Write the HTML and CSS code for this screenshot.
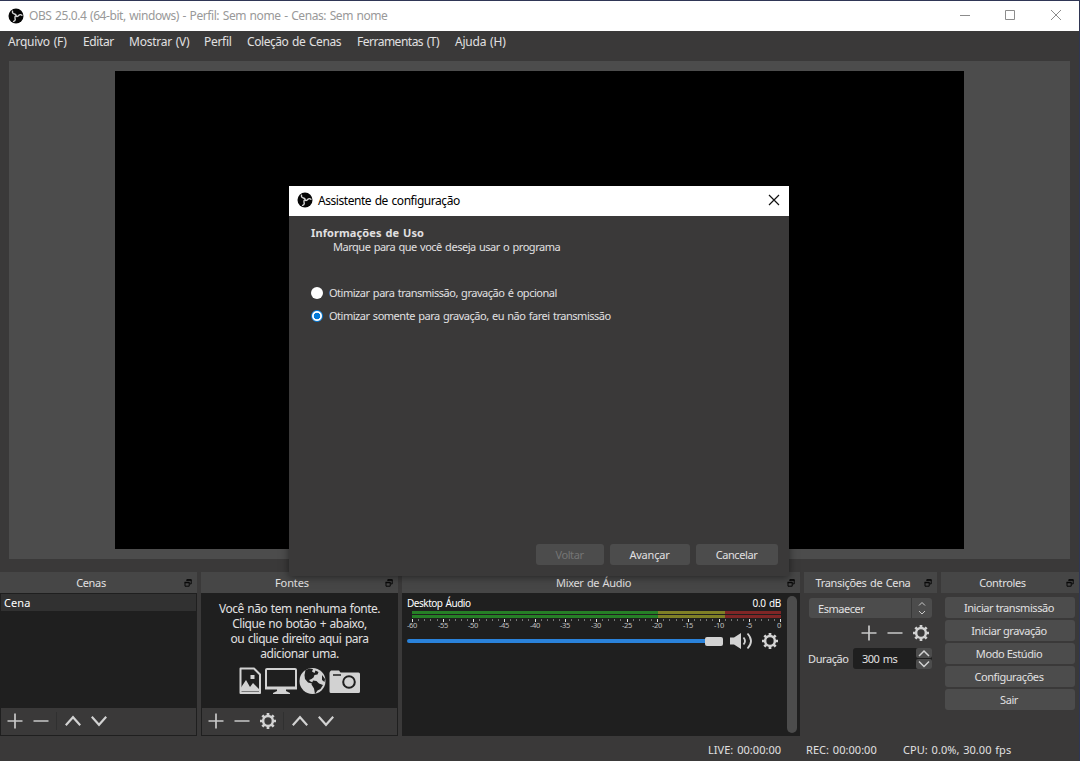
FILE: index.html
```html
<!DOCTYPE html>
<html lang="pt-BR">
<head>
  <meta charset="UTF-8">
  <meta name="viewport" content="width=device-width, initial-scale=1.0">
  <title>OBS 25.0.4</title>
  <link rel="stylesheet" href="styles.css">
</head>
<body>
  <svg class="defs">
    <symbol id="logo" viewBox="0 0 16 16">
      <circle cx="8" cy="8" r="7.500" fill="#060606"/>
      <g fill="none" stroke="#d8d8d8" stroke-width="1.400" stroke-linecap="round">
        <path d="M8.200 7.500C7.800 5.800 6.300 6.300 5.200 5.500C4.400 4.900 4.300 4 4.500 3.200"/>
        <path d="M8.200 7.500C7.800 5.800 6.300 6.300 5.200 5.500C4.400 4.900 4.300 4 4.500 3.200" transform="rotate(120 8 8)"/>
        <path d="M8.200 7.500C7.800 5.800 6.300 6.300 5.200 5.500C4.400 4.900 4.300 4 4.500 3.200" transform="rotate(240 8 8)"/>
      </g>
    </symbol>
    <symbol id="float" viewBox="0 0 8 8">
      <path d="M3 2V.9h4.200v4H5.500M1 3.500h4.200v3.700H1z" fill="none" stroke="#080808"/>
      <path d="M2.500 1h5M.5 3.500h5" stroke="#080808" stroke-width="1.600"/>
    </symbol>
    <symbol id="plus" viewBox="0 0 16 16">
      <path d="M8 .5v15M.5 8h15" stroke="#c8c8c8" stroke-width="1.700"/>
    </symbol>
    <symbol id="minus" viewBox="0 0 16 16">
      <path d="M.5 8h15" stroke="#c0c0c0" stroke-width="1.600"/>
    </symbol>
    <symbol id="up" viewBox="0 0 16 16">
      <path d="M.8 12.300L8 4.200L15.200 12.300" fill="none" stroke="#d2d2d2" stroke-width="2.100"/>
    </symbol>
    <symbol id="down" viewBox="0 0 16 16">
      <path d="M.8 3.700L8 11.800L15.200 3.700" fill="none" stroke="#d2d2d2" stroke-width="2.100"/>
    </symbol>
    <symbol id="gear" viewBox="0 0 16 16">
      <circle cx="8" cy="8" r="4.900" fill="none" stroke="#d2d2d2" stroke-width="2.500"/>
      <path d="M8 0v3M8 13v3M0 8h3M13 8h3M2.350 2.350l2.100 2.100M11.550 11.550l2.100 2.100M13.650 2.350l-2.100 2.100M4.450 11.550l-2.100 2.100" stroke="#d2d2d2" stroke-width="2.700"/>
    </symbol>
  </svg>

  <div class="window">
    <div class="titlebar">
      <svg class="logo"><use href="#logo"/></svg>
      <span class="caption">OBS 25.0.4 (64-bit, windows) - Perfil: Sem nome - Cenas: Sem nome</span>
      <svg class="winbuttons" viewBox="0 0 104 12">
        <path d="M1 6.500h10M46.500 1.500h9v9h-9zM92 1l10 10M102 1l-10 10" fill="none" stroke="#8c8c8c"/>
      </svg>
    </div>

    <div class="menu">
      <span class="m1">Arquivo (F)</span>
      <span class="m2">Editar</span>
      <span class="m3">Mostrar (V)</span>
      <span class="m4">Perfil</span>
      <span class="m5">Coleção de Cenas</span>
      <span class="m6">Ferramentas (T)</span>
      <span class="m7">Ajuda (H)</span>
    </div>

    <div class="preview"><div class="canvas"></div></div>

    <div class="docks">
      <div class="dock cenas">
        <div class="head"><span>Cenas</span><svg class="float"><use href="#float"/></svg></div>
        <div class="list">
          <div class="item">Cena</div>
        </div>
        <div class="tools">
          <svg><use href="#plus"/></svg>
          <svg><use href="#minus"/></svg>
          <i class="sep"></i>
          <svg><use href="#up"/></svg>
          <svg><use href="#down"/></svg>
        </div>
      </div>

      <div class="dock fontes">
        <div class="head"><span>Fontes</span><svg class="float"><use href="#float"/></svg></div>
        <div class="list empty">
          <p>Você não tem nenhuma fonte.</p>
          <p>Clique no botão + abaixo,</p>
          <p>ou clique direito aqui para</p>
          <p>adicionar uma.</p>
          <svg class="types" viewBox="0 0 122 28">
            <path d="M2.500 1.500h13.500l6 6v18.500h-19.500z" fill="none" stroke="#d2d2d2" stroke-width="2" stroke-linejoin="round"/>
            <path d="M3 24.500v-4l5-7.500 4 7 3-4 6 6v2.500z" fill="#d2d2d2"/>
            <rect x="12.500" y="8" width="4" height="4" fill="#d2d2d2"/>
            <rect x="28" y="2" width="30" height="18.500" rx="1" fill="none" stroke="#d2d2d2" stroke-width="2"/>
            <path d="M27 20h32v2.500h-11v1.500l4 2v1h-17v-1l4-2v-1.500h-12z" fill="#d2d2d2"/>
            <circle cx="74.500" cy="14" r="13" fill="#d2d2d2"/>
            <path d="M67.500 3l4-1.500 3.500.5-1 2.500 2.500 1.500 1-2.500 3 1.500-1 2.500-3 .5-1 2.500-2 1.500-2.500 1 1.500 1.500 2.500 1-1 1-4-1-3-3.500-.5-4zM84 8l3 4-.5 3-2.500-2zM75 13.500l3.500.5 2.500 2.500 4 1.500-2.500 4-3 1.500-2.500 3.500-1-5.500-2.500-4z" fill="#1f1f1f"/>
            <path d="M91.500 6q0-1.500 1.500-2.500h8l1.500 2h18q1.500 0 1.500 1.500v17.500q0 1.500-1.500 1.500h-27.500q-1.500 0-1.500-1.500z" fill="#d2d2d2"/>
            <path d="M95 8h8" stroke="#1f1f1f" stroke-width="1.500"/>
            <circle cx="111" cy="15" r="5.800" fill="none" stroke="#1f1f1f" stroke-width="2"/>
          </svg>
        </div>
        <div class="tools">
          <svg><use href="#plus"/></svg>
          <svg><use href="#minus"/></svg>
          <svg><use href="#gear"/></svg>
          <i class="sep"></i>
          <svg><use href="#up"/></svg>
          <svg><use href="#down"/></svg>
        </div>
      </div>

      <div class="dock mixer">
        <div class="head"><span>Mixer de Áudio</span><svg class="float"><use href="#float"/></svg></div>
        <div class="mixbody">
          <div class="channel">
            <div class="chname"><span>Desktop Áudio</span><span class="db">0.0 dB</span></div>
            <div class="bars">
              <div class="bar"></div>
              <div class="bar"></div>
            </div>
            <svg class="scale" id="scale" viewBox="0 0 384 12"></svg>
            <div class="volume">
              <div class="track"></div>
              <div class="handle"></div>
              <svg class="speaker" viewBox="0 0 24 18">
                <path d="M1 5.500h4L12 1v16l-7-4.500H1z" fill="#d2d2d2"/>
                <path d="M14.500 5.500q3 3.500 0 7M18.500 1.500q7 7.500 0 15" fill="none" stroke="#d2d2d2" stroke-width="1.800"/>
              </svg>
              <svg class="cog"><use href="#gear"/></svg>
            </div>
          </div>
          <div class="scroll"></div>
        </div>
      </div>

      <div class="dock trans">
        <div class="head"><span>Transições de Cena</span><svg class="float"><use href="#float"/></svg></div>
        <div class="combo">
          <span>Esmaecer</span>
          <svg class="arrows" viewBox="0 0 20 20"><path d="M7 7.500l3-3 3 3M7 13l3 3 3-3" fill="none" stroke="#c8c8c8"/></svg>
        </div>
        <div class="transtools">
          <svg><use href="#plus"/></svg>
          <svg><use href="#minus"/></svg>
          <svg><use href="#gear"/></svg>
        </div>
        <div class="duration">
          <span class="durlabel">Duração</span>
          <div class="spin">
            <span>300 ms</span>
            <div class="steps">
              <svg viewBox="0 0 16 10"><path d="M3 8l5-5 5 5" fill="none" stroke="#d2d2d2" stroke-width="1.500"/></svg>
              <svg viewBox="0 0 16 10"><path d="M3 2.500l5 5 5-5" fill="none" stroke="#d2d2d2" stroke-width="1.500"/></svg>
            </div>
          </div>
        </div>
      </div>

      <div class="dock controls">
        <div class="head"><span>Controles</span><svg class="float"><use href="#float"/></svg></div>
        <div class="buttons">
          <button>Iniciar transmissão</button>
          <button>Iniciar gravação</button>
          <button>Modo Estúdio</button>
          <button>Configurações</button>
          <button>Sair</button>
        </div>
      </div>
    </div>

    <div class="status">
      <span class="live">LIVE: 00:00:00</span>
      <span class="rec">REC: 00:00:00</span>
      <span class="cpu">CPU: 0.0%, 30.00 fps</span>
    </div>
  </div>

  <div class="dialog">
    <div class="dtitle">
      <svg class="logo"><use href="#logo"/></svg>
      <span>Assistente de configuração</span>
      <svg class="close" viewBox="0 0 12 12"><path d="M1 1l10 10M11 1L1 11" stroke="#111" stroke-width="1.200"/></svg>
    </div>
    <div class="dbody">
      <h1>Informações de Uso</h1>
      <p class="sub">Marque para que você deseja usar o programa</p>
      <label class="opt"><i class="radio"></i><span>Otimizar para transmissão, gravação é opcional</span></label>
      <label class="opt"><i class="radio on"></i><span>Otimizar somente para gravação, eu não farei transmissão</span></label>
    </div>
    <div class="dbuttons">
      <button class="back" disabled>Voltar</button>
      <button class="next">Avançar</button>
      <button class="cancel">Cancelar</button>
    </div>
  </div>

  <script>
    // dB scale: small tick every 1 dB, label every 5 dB
    let out = '';
    for (let db = -60; db <= 0; db++) {
      let x = Math.round(5 + (db + 60) * 6.13) + 0.5;
      let major = db % 5 == 0;
      out += '<line x1="' + x + '" x2="' + x + '" y1="0" y2="' + (major ? 3 : 2) + '" class="' + (major ? 'major' : 'minor') + '"/>';
      if (major) {
        out += '<text x="' + (db == 0 ? x - 1.5 : x - 0.5) + '" y="8.500">' + db + '</text>';
      }
    }
    document.getElementById('scale').innerHTML = out;
  </script>
</body>
</html>
```
FILE: styles.css
```css
html, body {
  margin: 0;
  padding: 0;
  height: 100%;
}
body {
  background-color: #2f3656;
  font-family: "Noto Sans", sans-serif;
  font-size: 11px;
  letter-spacing: -0.48px;
  word-spacing: 0.9px;
  color: #e1e0e1;
  overflow: hidden;
  white-space: nowrap;
}
p, h1 {
  margin: 0;
}
svg {
  display: block;
}
.defs {
  position: absolute;
  width: 0;
  height: 0;
}
.window {
  box-sizing: border-box;
  width: 1079px;
  height: 761px;
  border-top: 1px solid #2f3656;
  background-color: #3a3939;
}
.titlebar {
  display: flex;
  align-items: center;
  height: 30px;
  padding-left: 8px;
  background-color: white;
  color: #999;
  font-size: 12px;
}
.logo {
  width: 16px;
  height: 16px;
  flex: none;
}
.caption {
  margin: -1px 0 0 5px;
  letter-spacing: -0.43px;
}
.winbuttons {
  width: 104px;
  height: 12px;
  margin: -2px 16px 0 auto;
}
.menu {
  display: flex;
  height: 22px;
  padding-left: 8px;
  line-height: 22px;
  font-size: 12px;
  letter-spacing: -0.25px;
}
.m1 { width: 75px; }
.m2 { width: 46px; letter-spacing: -0.4px; }
.m3 { width: 75px; }
.m4 { width: 43px; letter-spacing: -0.3px; }
.m5 { width: 110px; letter-spacing: -0.43px; }
.m6 { width: 98px; letter-spacing: -0.5px; }
.m7 { letter-spacing: -0.2px; }
.preview {
  height: 478px;
  margin: 8px 9px 0;
  padding: 10px 106px;
  background-color: #4c4c4c;
}
.canvas {
  width: 849px;
  height: 478px;
  background-color: black;
}
.docks {
  display: flex;
  gap: 4px;
  height: 164px;
  margin-top: 13px;
}
.dock {
  display: flex;
  flex-direction: column;
}
.cenas { width: 197px; }
.fontes { width: 197px; }
.mixer { width: 398px; }
.trans { width: 133px; }
.controls { width: 138px; }
.head {
  display: flex;
  align-items: center;
  height: 21px;
  flex: none;
  background-color: #464646;
}
.head span {
  flex: 1;
  padding-right: 2px;
  text-align: center;
  letter-spacing: -0.34px;
}
.fontes .head span {
  letter-spacing: -0.1px;
}
.float {
  width: 8px;
  height: 8px;
  margin-right: 5px;
}
.list {
  flex: 1;
  border: 1px solid #1f1f1f;
  border-bottom: none;
  background-color: #1f1f1f;
}
.item {
  height: 17px;
  padding-left: 3px;
  line-height: 17px;
  letter-spacing: 0.1px;
  background-color: #313131;
  color: white;
}
.tools {
  display: flex;
  align-items: center;
  gap: 10px;
  box-sizing: border-box;
  height: 28px;
  padding: 0 0 2px 6px;
  border: 1px solid #1f1f1f;
  border-top: none;
}
.tools svg {
  width: 16px;
  height: 16px;
}
.sep {
  width: 1px;
  height: 18px;
  margin: 0 -2px 0 -3px;
  background-color: #303030;
}
.empty {
  padding-top: 7px;
  font-size: 12px;
  line-height: 15px;
  text-align: center;
}
.types {
  width: 122px;
  height: 28px;
  margin: 6px 0 0 36px;
}
.mixbody {
  display: flex;
  flex: 1;
  background-color: #1f1f1f;
}
.channel {
  width: 376px;
  padding: 3px 0 0 5px;
}
.chname {
  display: flex;
  justify-content: space-between;
  width: 374px;
  height: 15px;
  line-height: 15px;
  font-size: 10px;
  color: white;
}
.db {
  letter-spacing: -0.3px;
}
.bars {
  width: 369px;
  margin-left: 5px;
}
.bar {
  height: 3px;
  margin-bottom: 1px;
  background: linear-gradient(to right, #267f26 246px, #7f7f26 246px 313px, #7f2626 313px);
}
.scale {
  width: 384px;
  height: 12px;
  overflow: visible;
}
.scale text {
  font-size: 7.5px;
  letter-spacing: -0.3px;
  fill: #c0c0c0;
  text-anchor: middle;
}
.major { stroke: #e0e0e0; }
.minor { stroke: #777; }
.volume {
  display: flex;
  align-items: center;
  height: 20px;
}
.track {
  width: 298px;
  height: 4px;
  border-radius: 2px 0 0 2px;
  background-color: #2a82da;
}
.handle {
  width: 18px;
  height: 9px;
  border-radius: 2px;
  background-color: #d2d2d2;
  flex: none;
}
.speaker {
  width: 24px;
  height: 18px;
  margin-left: 6px;
  flex: none;
}
.cog {
  width: 16px;
  height: 16px;
  margin-left: 9px;
  flex: none;
}
.scroll {
  width: 10px;
  margin: 3px 0 3px 4px;
  border-radius: 5px;
  background-color: #4c4c4c;
}
.combo {
  display: flex;
  align-items: center;
  justify-content: space-between;
  width: 123px;
  height: 20px;
  margin: 5px 0 0 5px;
  border-radius: 3px;
  background-color: #4c4c4c;
}
.combo span {
  padding-left: 9px;
}
.arrows {
  width: 20px;
  height: 20px;
  border-left: 1px solid #383838;
}
.transtools {
  display: flex;
  gap: 10px;
  margin: 7px 0 0 57px;
}
.transtools svg {
  width: 16px;
  height: 16px;
}
.duration {
  display: flex;
  align-items: center;
  margin-top: 7px;
  padding-left: 4px;
}
.durlabel {
  width: 45px;
  letter-spacing: -0.4px;
}
.spin {
  display: flex;
  align-items: center;
  justify-content: space-between;
  width: 79px;
  height: 21px;
  border-radius: 3px;
  background-color: #1f1f1f;
}
.spin span {
  padding-left: 9px;
}
.steps {
  display: flex;
  flex-direction: column;
  gap: 1px;
}
.steps svg {
  width: 16px;
  height: 10px;
  border-radius: 2px;
  background-color: #4c4c4c;
}
.buttons {
  display: flex;
  flex-direction: column;
  gap: 2px;
  padding: 4px 4px 0;
}
button {
  height: 21px;
  padding: 0 1px 0 0;
  border: none;
  border-radius: 3px;
  background-color: #4c4c4c;
  color: #e1e0e1;
  font-family: inherit;
  font-size: 11px;
  letter-spacing: -0.42px;
}
.buttons button {
  padding-right: 2px;
}
.status {
  display: flex;
  padding-left: 708px;
  line-height: 27px;
  letter-spacing: 0.04px;
}
.live { width: 98px; }
.rec { width: 97px; }
.dialog {
  position: absolute;
  left: 289px;
  top: 186px;
  display: flex;
  flex-direction: column;
  width: 500px;
  height: 390px;
  background-color: #3a3939;
  box-shadow: 0 1px 8px rgba(0, 0, 0, 0.5);
}
.dtitle {
  display: flex;
  align-items: center;
  height: 30px;
  padding: 0 9px 0 8px;
  background-color: white;
  color: black;
  font-size: 12px;
}
.dtitle .logo, .dtitle .close {
  margin-top: -2px;
}
.dtitle span {
  margin: -2px 0 0 5px;
  letter-spacing: -0.45px;
}
.close {
  width: 12px;
  height: 12px;
  margin-left: auto;
}
.dbody {
  flex: 1;
  padding: 10px 22px;
}
h1 {
  font-size: 11px;
  line-height: 14px;
  letter-spacing: 0.1px;
}
.sub {
  padding-left: 22px;
  margin-bottom: 28px;
  line-height: 14px;
}
.opt {
  display: flex;
  align-items: center;
  gap: 6px;
  height: 22px;
  margin-bottom: 1px;
}
.opt span {
  margin-top: -2px;
}
.radio {
  width: 12px;
  height: 12px;
  border-radius: 50%;
  background-color: white;
}
.radio.on {
  box-sizing: border-box;
  border: 1px solid #0078d7;
  background: radial-gradient(#0078d7 3px, white 3.6px);
}
.dbuttons {
  display: flex;
  justify-content: flex-end;
  gap: 6px;
  padding: 0 11px 11px 0;
}
.back {
  width: 68px;
  color: #757575;
}
.next {
  width: 80px;
  letter-spacing: -0.2px;
}
.cancel { width: 82px; }
```
